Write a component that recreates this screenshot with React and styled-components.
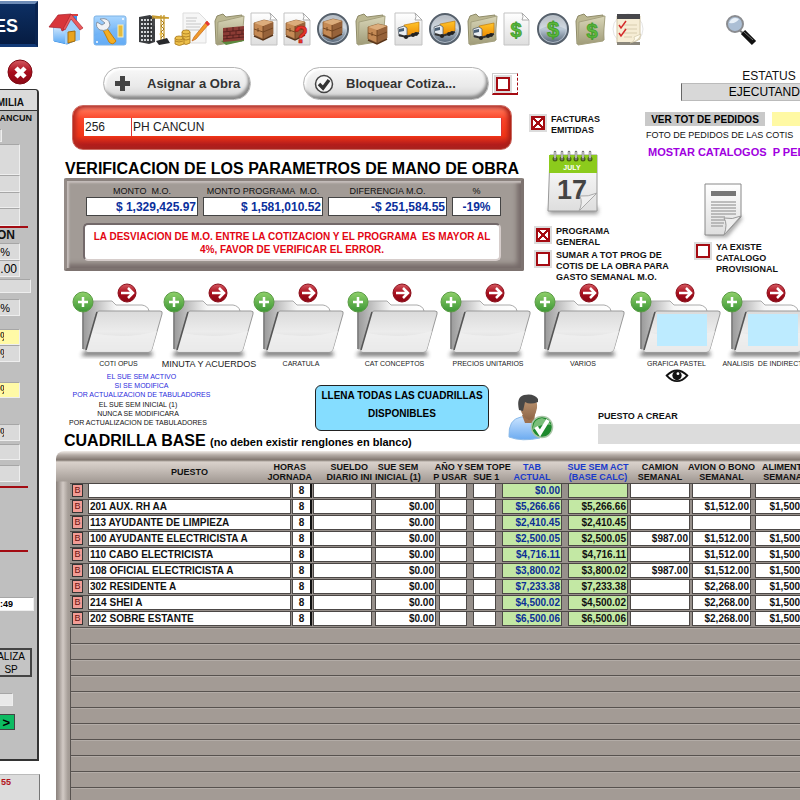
import * as React from "react";
import styled, { createGlobalStyle, css } from "styled-components";

const GlobalStyle = createGlobalStyle`
  * {
    box-sizing: border-box;
  }
  body {
    margin: 0;
    background: #fff;
    color: #111;
    font-family: "Liberation Sans", Arial, sans-serif;
    font-size: 10px;
    overflow-x: hidden;
  }
  input,
  button {
    font-family: inherit;
    border-radius: 0;
    margin: 0;
  }
  svg {
    display: block;
    overflow: visible;
  }
`;

const Page = styled.div`
  display: flex;
  min-height: 100vh;
  overflow: hidden;
`;

/* ---------- left side panel ---------- */

const Side = styled.aside`
  flex: 0 0 40px;
  display: flex;
  flex-direction: column;
  align-items: flex-start;
  overflow: hidden;
`;

const Brand = styled.div`
  display: flex;
  align-items: center;
  justify-content: flex-end;
  width: 38px;
  height: 46px;
  margin-top: 1px;
  padding: 4px 17px 0 0;
  color: #fff;
  font-size: 18px;
  font-weight: bold;
  background: linear-gradient(#0d2f63, #061c42);
  border: 3px solid #123a77;
  border-top-color: #6f8db8;
  border-right-color: #0a2450;
  border-left: 0;
`;

const IconButton = styled.button`
  padding: 0;
  border: 0;
  background: none;
  cursor: pointer;
`;

const CloseButton = styled(IconButton)`
  margin: 13px 0 4px 8px;
`;

const SidePanel = styled.div`
  width: 39px;
  height: 672px;
  background: #bfbfbf;
  border: solid #333;
  border-width: 1px 2px 2px 0;
  border-top-right-radius: 4px;
  overflow: hidden;
`;

const SideHead = styled.div`
  display: flex;
  align-items: center;
  justify-content: flex-end;
  height: 21px;
  padding: 4px 13px 0 0;
  background: #dadada;
  border-bottom: 1px solid #333;
  font-weight: bold;
`;

const SideText = styled.div`
  display: flex;
  justify-content: flex-end;
  width: ${p => p.$w}px;
  font-size: ${p => p.$size}px;
  line-height: 14px;
  font-weight: bold;
`;

const SideField = styled.input`
  display: block;
  width: ${p => p.$w || 20}px;
  height: ${p => p.$h || 16}px;
  margin-top: ${p => p.$mt || 0}px;
  padding: 0 ${p => p.$pad || 1}px 0 0;
  border: solid #eee;
  border-width: 0 1px 1px 0;
  border-top: 1px solid #a6a6a6;
  background: ${p => p.$bg || "#dadada"};
  font-size: ${p => p.$size || 12}px;
  font-weight: ${p => (p.$bold ? "bold" : "normal")};
  text-align: right;
  outline: none;
`;

const RedLine = styled.div`
  width: 28px;
  height: 2px;
  margin-top: ${p => p.$mt || 0}px;
  background: #a30b12;
`;

const SideButton = styled.button`
  display: flex;
  align-items: center;
  justify-content: flex-end;
  width: 32px;
  height: 29px;
  margin-top: 37px;
  padding: 0 5px 0 0;
  border: 2px solid #444;
  border-left: 0;
  background: #c4c4c4;
  font-size: 10px;
  line-height: 13px;
`;

const NextButton = styled(SideButton)`
  width: 15px;
  height: 16px;
  margin-top: 8px;
  padding: 0 4px 0 0;
  background: #0dbb62;
  border-width: 1px;
  font-weight: bold;
  font-size: 13px;
`;

const SideFooter = styled.div`
  display: flex;
  justify-content: flex-end;
  flex: 1;
  width: 40px;
  margin-top: 13px;
  padding: 2px 28px 0 0;
  background: #dcdcdc;
  border-top: 1px solid #bbb;
  border-right: 1px solid #777;
  color: #b3131b;
  font-size: 9px;
  font-weight: bold;
`;

/* ---------- main area ---------- */

const Main = styled.main`
  flex: 1;
  min-width: 0;
  display: flex;
  flex-direction: column;
`;

const Toolbar = styled.nav`
  display: flex;
  gap: 5px;
  height: 66px;
  padding: 12px 0 0 8px;
  align-items: flex-start;

  & > :last-child {
    margin-left: 75px;
  }
`;

const Upper = styled.section`
  display: flex;
`;

const LeftColumn = styled.div`
  flex: 0 0 487px;
  min-width: 0;
`;

const PillRow = styled.div`
  display: flex;
  align-items: center;
  padding: 1px 0 0 63px;
`;

const PillButton = styled.button`
  display: flex;
  align-items: center;
  width: ${p => p.$w}px;
  height: 33px;
  margin-right: ${p => p.$gap}px;
  padding: 0 0 0 10px;
  gap: ${p => p.$inner}px;
  border: 1px solid #b5b5b5;
  border-radius: 17px;
  background: linear-gradient(#f8f8f8, #e9e9e9 60%, #cfcfcf);
  box-shadow: inset -2px -3px 3px #888, inset 2px 2px 2px #fff;
  color: #333;
  font-size: 13px;
  font-weight: bold;
  white-space: nowrap;
`;

const CheckFrame = styled.div`
  width: 26px;
  height: 22px;
  padding: 1px;
  border: 1px solid #ccc;
  border-bottom: 2px solid #a50b12;
  border-right: 1px dashed #a50b12;
`;

const CheckInput = styled.input`
  appearance: none;
  flex: none;
  display: block;
  width: 18px;
  height: 18px;
  margin: 0;
  padding: 0;
  border: 2px solid #dcdcdc;
  box-shadow: inset 0 0 0 2px #a50b12;
  background: #fff;

  &:checked {
    background: linear-gradient(
        45deg,
        transparent 44%,
        #a50b12 45%,
        #a50b12 55%,
        transparent 56%
      ),
      linear-gradient(
        -45deg,
        #fff 44%,
        #a50b12 45%,
        #a50b12 55%,
        #fff 56%
      );
  }
`;

const RedPanel = styled.div`
  display: flex;
  height: 45px;
  margin: 5px 15px 0 32px;
  padding: 12px 9px 14px 11px;
  border-radius: 11px;
  border: 1px solid #c96a62;
  background: linear-gradient(
    #d98078,
    #ff6a4c 12%,
    #f9452a 30%,
    #f03416 70%,
    #b81f1c 88%,
    #a31d20
  );
  box-shadow: inset 3px 0 4px #b52a20, inset -3px 0 4px #a82118;
`;

const PlainInput = styled.input`
  height: 18px;
  width: ${p => p.$w || "auto"};
  flex: ${p => (p.$w ? "none" : 1)};
  min-width: 0;
  padding: 0 1px;
  border: 0;
  border-right: 1px solid #d33;
  background: #fff;
  color: #222;
  font-size: 12px;
  outline: none;
`;

const Title = styled.h1`
  margin: 10px 0 0 25px;
  font-size: 16px;
  line-height: 18px;
  white-space: nowrap;
  color: #000;
`;

const bevel = css`
  background: #a29b96;
  border: 3px solid #7d7370;
  border-top-color: #8b827e;
  border-left-color: #948b87;
  box-shadow: inset 2px 2px 2px #c5bdba, inset -4px -4px 5px #766b69;
`;

const CheckPanel = styled.div`
  ${bevel}
  height: 93px;
  margin: 0 3px 0 24px;
  padding: 4px 20px 0 19px;
  border-radius: 2px;
`;

const Amounts = styled.div`
  display: grid;
  grid-template-columns: 112fr 120fr 119fr 49fr;
  gap: 5px;
`;

const Amount = styled.label`
  display: flex;
  flex-direction: column;
  align-items: center;
  min-width: 0;
  font-size: 9px;
  line-height: 12px;
  white-space: pre;

  input {
    width: 100%;
    height: 19px;
    padding: 0 1px;
    border: 1px solid #444;
    background: #fff;
    color: #0a2f9c;
    font-size: 12px;
    font-weight: bold;
    text-align: ${p => (p.$center ? "center" : "right")};
    outline: none;
  }
`;

const Warning = styled.p`
  height: 38px;
  margin: 7px 0 0 -3px;
  padding: 5px 4px 0;
  border: 2px solid #73696a;
  border-right-color: #d6cdcb;
  border-bottom-color: #d6cdcb;
  border-radius: 5px;
  background: #fff;
  color: #e30613;
  font-size: 10px;
  line-height: 13px;
  font-weight: bold;
  text-align: center;
  white-space: pre;
`;

const MiddleColumn = styled.div`
  flex: 0 0 118px;
  min-width: 0;
  padding: 48px 0 0 2px;
  white-space: nowrap;
`;

const CheckRow = styled.label`
  display: flex;
  align-items: flex-start;
  gap: 4px;
  margin: ${p => p.$mt || 0}px 0 0 ${p => p.$ml || 0}px;
  font-size: 9px;
  line-height: 11px;
  font-weight: bold;
`;

const Calendar = styled(IconButton)`
  display: block;
  margin: 14px 0 0 17px;
`;

const RightColumn = styled.div`
  flex: 1;
  min-width: 0;
  overflow: hidden;
  white-space: nowrap;
`;

const Status = styled.label`
  display: flex;
  flex-direction: column;
  align-items: center;
  width: 176px;
  margin-left: 36px;
  padding-top: 3px;
  font-size: 12px;
  line-height: 14px;

  input {
    width: 100%;
    height: 18px;
    border: 1px solid #bbb;
    border-left-color: #666;
    background: #d8d8d8;
    font-size: 12px;
    text-align: center;
  }
`;

const Orders = styled.div`
  display: flex;
  gap: 7px;
  margin-top: 11px;

  button {
    flex: none;
    width: 120px;
    height: 14px;
    padding: 0;
    border: 0;
    background: #c9c9c9;
    font-size: 10px;
    font-weight: bold;
  }
  input {
    flex: 1;
    min-width: 0;
    height: 14px;
    border: 0;
    background: #fff9a4;
  }
`;

const OrdersNote = styled.div`
  margin: 4px 0 0 1px;
  font-size: 9px;
  line-height: 10px;
`;

const CatalogLink = styled.a`
  display: block;
  margin: 6px 0 0 3px;
  color: #a000e0;
  font-size: 11px;
  line-height: 13px;
  font-weight: bold;
  text-decoration: none;
  white-space: pre;
`;

const DocButton = styled(IconButton)`
  display: block;
  margin: 23px 0 0 58px;
`;

const Folders = styled.section`
  display: grid;
  grid-template-columns: 91px 90px 94px 93px 94px 96px 91px 91px;
  height: 89px;
  padding-left: 33px;
`;

const FolderButton = styled.button`
  display: flex;
  flex-direction: column;
  align-items: center;
  padding: 0;
  border: 0;
  background: none;
  font-size: ${p => p.$size || 7}px;
  line-height: 10px;
  white-space: pre;
  color: #222;

  svg:first-child {
    align-self: flex-start;
  }
`;

const Actions = styled.section`
  display: flex;
  align-items: flex-start;
  padding-left: 24px;
`;

const ActionStack = styled.div`
  flex: 0 0 425px;
  margin-right: 19px;
`;

const ActionRow = styled.div`
  display: flex;
  justify-content: space-between;
  align-items: flex-start;
`;

const Notes = styled.div`
  width: 155px;
  font-size: 7px;
  line-height: 9px;
  text-align: center;
  white-space: nowrap;

  p {
    margin: 0 7px 1px 0;
  }
  p:first-child {
    margin-right: 0;
    color: #2b2bdc;
  }
`;

const FillButton = styled.button`
  width: 174px;
  height: 46px;
  margin-top: 13px;
  padding: 0 0 6px;
  border: 1px solid #222;
  border-radius: 6px;
  background: #85ddff;
  font-size: 10px;
  line-height: 18px;
  font-weight: bold;
`;

const PersonButton = styled(IconButton)`
  margin-top: 21px;
`;

const NewPosition = styled.label`
  flex: 1;
  margin: 39px 0 0 43px;
  font-size: 9px;
  line-height: 11px;
  font-weight: bold;

  input {
    display: block;
    width: 100%;
    height: 20px;
    margin-top: 2px;
    border: 0;
    background: #dcdcdc;
  }
`;

const Subtitle = styled.h2`
  margin: 1px 0 0;
  font-size: 16px;
  line-height: 18px;
  color: #000;
  white-space: nowrap;

  small {
    font-size: 11px;
  }
`;

const GridPanel = styled.section`
  flex: 1;
  display: flex;
  flex-direction: column;
  margin-left: 16px;
  padding: 11px 0 0 14px;
  overflow: hidden;
  border-top-left-radius: 8px;
  background: linear-gradient(
      #f1ece8,
      #b5aca6 4px,
      #80766f 9px,
      #d9d1cb 11px,
      #cdc5bf 16px,
      #a59d97 30px,
      transparent 31px
    ),
    linear-gradient(
      90deg,
      #8b827d,
      #a39b96 3px,
      #d2cac5 7px,
      #a59d97 12px,
      #a39b95 14px
    );
`;

const Grid = styled.table`
  width: 747px;
  table-layout: fixed;
  border-collapse: collapse;
  font-size: 10px;
  font-weight: bold;
`;

const HeadCell = styled.th`
  height: 21px;
  padding: 0 ${p => p.$gap || 0}px 0 0;
  color: ${p => (p.$blue ? "#1a3acb" : "#111")};
  font-size: 9px;
  line-height: 10px;
  white-space: pre;

  div {
    display: flex;
    justify-content: ${p => p.$align || "center"};
  }
`;

const Cell = styled.td`
  height: 16px;
  padding: 0 ${p => p.$gap || 0}px 1px 0;
  background: #97908b;
  border-top: 1px solid #4b4745;
`;

const CellBox = styled.div`
  height: 14px;
  padding: 0 1px;
  border: 1px solid #4c4846;
  border-width: 0 1px 1px;
  background: ${p => (p.$green ? "#c3e8a4" : "#fff")};
  color: ${p => (p.$blue ? "#0c2f95" : "#111")};
  text-align: ${p => p.$align || "right"};
  line-height: 14px;
  white-space: nowrap;
  ${p => p.$raised && "border-right: 2px solid #111;"}
`;

const DeleteButton = styled.button`
  display: block;
  width: 11px;
  height: 13px;
  margin-left: 2px;
  padding: 0;
  border: 1px solid #333;
  background: #f29c95;
  color: #6a1111;
  font-size: 9px;
  line-height: 11px;
`;

const EmptyRows = styled.div`
  flex: 1;
  min-height: 120px;
  border-left: 1px solid #57524f;
  background: repeating-linear-gradient(
    #57524f,
    #57524f 1px,
    #b3aca7 1px,
    #b3aca7 2px,
    #a39b95 2px,
    #a39b95 16px
  );
`;

/* ---------- drawings ---------- */

const Gradient = ({ id, from, to, mid, x }) => (
  <linearGradient id={id} x1="0" y1="0" x2={x ? 1 : 0} y2={x ? 0 : 1}>
    <stop offset="0" stopColor={from} />
    {mid && <stop offset=".5" stopColor={mid} />}
    <stop offset="1" stopColor={to} />
  </linearGradient>
);

const HiddenSvg = styled.svg`
  position: absolute;
`;

const Gradients = () => (
  <HiddenSvg width="0" height="0" aria-hidden="true">
    <defs>
      <Gradient id="sky" from="#a9d6ff" to="#4c9df0" />
      <Gradient id="wall" from="#ffffff" to="#59a9f5" />
      <Gradient id="paper" from="#ffffff" to="#dedede" />
      <Gradient id="steel" from="#8b929b" mid="#bcc9d6" to="#4e5d6e" />
      <Gradient id="khaki" from="#d9d6b8" to="#9f9b78" />
      <Gradient id="truck" from="#ffc52b" to="#ee8a00" />
      <Gradient id="green" from="#8fd06a" to="#3c9636" />
      <Gradient id="red" from="#d55a62" mid="#a80d1c" to="#8a0815" />
      <Gradient id="front" from="#dadada" mid="#ececec" to="#cfcfcf" />
      <Gradient id="back" from="#9a9a9a" mid="#f7f7f7" to="#fff" x />
      <Gradient id="skin" from="#c29a76" to="#8d6547" />
      <Gradient id="shirt" from="#c9e3ff" to="#6cabf0" />
      <filter id="soft" x="-20%" y="-50%" width="140%" height="200%">
        <feGaussianBlur stdDeviation="2" />
      </filter>
    </defs>
  </HiddenSvg>
);

const House = () => (
  <g>
    <rect x="24" y="3" width="5" height="10" fill="#3f8fe8" />
    <rect x="23" y="2" width="7" height="2" fill="#d8403f" />
    <path d="M6 15 L19 5 L31 16 V27 L19 32 L6 29Z" fill="url(#wall)" stroke="#3b8de0" />
    <path d="M6 15 L10 8 L19 18 V32 L6 29Z" fill="url(#wall)" />
    <path d="M10 7 L23 6 L32 17 V28 L17 32 V18Z" fill="#9fd0fb" />
    <path d="M1 15 L10 3 L23 2 L16 18 L14 19 L13 16Z" fill="#d8363b" stroke="#a51d26" strokeWidth=".7" />
    <path d="M23 2 L35 16 L32 18 L23 7 L17 18 L15 17Z" fill="#ea5a5c" stroke="#a51d26" strokeWidth=".6" />
    <path d="M20 20 L27 19 V29 L20 31Z" fill="#e8a41f" stroke="#a86c0b" />
  </g>
);

const Tools = () => (
  <g>
    <rect x="3" y="4" width="32" height="29" rx="2" fill="url(#sky)" stroke="#7db2e4" />
    <path d="M3 24 Q18 18 35 12 V33 H3Z" fill="#74b5f6" opacity=".6" />
    <path d="M15 15 L25 29 Q22 34 18 30 L12 18Z" fill="#f5ae22" stroke="#c67d08" />
    <path d="M9 7 Q18 5 19 13 Q17 20 9 18 Q4 15 6 10 L11 13 L14 11Z" fill="#f1f3f6" stroke="#8795a6" />
    <rect x="27" y="13" width="5" height="12" fill="#e5bb3c" stroke="#f8edbc" />
    <circle cx="6" cy="30" r="1" fill="#fff" />
    <circle cx="32" cy="7" r="1" fill="#fff" />
  </g>
);

const Crane = () => (
  <g>
    <path d="M5 5 L16 3 L21 6 V30 L15 32 L5 30Z" fill="#3b3d40" />
    <path d="M7 8h11M7 12h11M7 16h11M7 20h11M7 24h11M7 28h11" stroke="#d2d4d6" strokeWidth="2" strokeDasharray="2 1" />
    <path d="M16 5 V31" stroke="#222" />
    <path d="M27 3 V30 M30 3 V30 M18 6 H35 M18 4 L35 6" stroke="#c79a2d" strokeWidth="1.3" />
    <path d="M27 8 L30 11 L27 14 L30 17 L27 20 L30 23 L27 26" fill="none" stroke="#a87c1b" />
    <path d="M20 6 V14" stroke="#555" />
    <path d="M22 29 L33 26 L36 31 L25 33Z" fill="#28292c" />
    <circle cx="27" cy="22" r="1.5" fill="#edc14c" />
  </g>
);

const Sheet = ({ w = 27 }) => (
  <g>
    <path d={`M1 1 H${w - 7} L${w} 8 V33 H1Z`} fill="url(#paper)" stroke="#c3c3c3" />
    <path d={`M${w - 7} 1 Q${w - 5} 5 ${w - 7} 8 H${w}Z`} fill="#fff" stroke="#aaa" />
  </g>
);

const Coins = () => (
  <g>
    <path d="M8 1 H24 L31 8 V31 H8Z" fill="#f6f6f6" stroke="#ddd" />
    <path d="M11 6h11M11 9h10M11 12h15M11 15h14M11 18h13" stroke="#bbb" strokeWidth=".8" />
    <path d="M32 9 L34 12 L21 27 L17 29 L19 25Z" fill="#f09a2a" stroke="#c3661a" strokeWidth=".7" />
    <path d="M31 10 L34 13" stroke="#e43636" strokeWidth="3" />
    <g fill="#edc04b" stroke="#a9781d" strokeWidth=".8">
      <path d="M7 20v11q4 3 8 0V20Z" />
      <ellipse cx="11" cy="20" rx="4" ry="2" />
      <path d="M0 26v6q4 3 9 0v-6Z" />
      <ellipse cx="4" cy="26" rx="4" ry="2" />
      <path d="M7 24q4 2 8 0M7 27q4 2 8 0M0 29q4 2 8 0" fill="none" />
    </g>
  </g>
);

const Archive = () => (
  <g>
    <path d="M1 9 L3 4 L9 2 L12 5 L28 3 L29 28 L2 32Z" fill="#bcb892" stroke="#8f8b69" />
    <path d="M4 10 L13 8 L30 4 L28 29 L3 33Z" fill="url(#khaki)" stroke="#a5a17f" />
  </g>
);

const Bricks = () => (
  <g>
    <Archive />
    <path d="M7 29 L30 24 V29 L12 33Z" fill="#5c8a3f" />
    <path d="M9 16 L30 14 V28 L9 30Z" fill="#8c3c35" />
    <path
      d="M9 20 L30 18 M9 24 L30 22 M9 27 L30 25 M13 16v3M19 15v4M25 15v3M16 20v3M22 19v3M28 19v3M13 24v3M19 23v3M25 23v3"
      stroke="#4c1c19"
      strokeWidth=".8"
    />
  </g>
);

const Crate = ({ x = 0, y = 0 }) => (
  <g transform={`translate(${x} ${y})`}>
    <path d="M0 3 L10 0 L19 2 V14 L9 19 L0 15Z" fill="#c58a55" stroke="#815027" strokeWidth=".7" />
    <path d="M9 6 L19 2 V14 L9 19Z" fill="#96623a" />
    <path d="M0 3 L9 6 L19 2 L10 0Z" fill="#dcad7c" />
    <path d="M0 9 L9 12 L19 8 M9 6 V19 M4 8 V12" fill="none" stroke="#71431f" strokeWidth=".9" />
    <path d="M0 16 L9 20 L19 15" fill="none" stroke="#5a3519" strokeWidth="1.5" />
  </g>
);

const Truck = ({ x = 0, y = 0 }) => (
  <g transform={`translate(${x} ${y})`}>
    <path d="M6 3 L21 0 V10 L8 14Z" fill="url(#truck)" stroke="#bb7000" strokeWidth=".6" />
    <path d="M0 6 L6 4 L9 6 V15 L1 14Z" fill="#e8edf2" stroke="#58616a" strokeWidth=".8" />
    <path d="M1 7 L6 6 V9 L1 10Z" fill="#4a6076" />
    <path d="M1 13 L8 15 L21 11" stroke="#333" strokeWidth="2" fill="none" />
    <circle cx="8" cy="15" r="2" fill="#222" />
    <circle cx="15" cy="13" r="2" fill="#222" />
    <circle cx="18" cy="12" r="2" fill="#222" />
  </g>
);

const Disc = () => (
  <g>
    <circle cx="17" cy="17" r="15" fill="url(#steel)" stroke="#56606b" strokeWidth="2" />
    <circle cx="17" cy="17" r="13.5" fill="none" stroke="#c3ccd5" strokeWidth=".8" />
    <path d="M4 17 A13 13 0 0 1 30 17 Q17 10 4 17Z" fill="#fff" opacity=".35" />
  </g>
);

const Dollar = ({ x, y, size = 20 }) => (
  <text
    x={x}
    y={y}
    fontSize={size}
    fontWeight="bold"
    textAnchor="middle"
    fill="#5cbb3a"
    stroke="#3f9a2c"
    strokeWidth=".8"
  >
    $
  </text>
);

const Question = () => (
  <g>
    <Sheet />
    <Crate x={3} y={8} />
    <text x="18" y="31" fontSize="23" fontWeight="bold" textAnchor="middle" fill="#e5352a" stroke="#a91912" strokeWidth=".6">
      ?
    </text>
  </g>
);

const Checklist = () => (
  <g>
    <circle cx="16" cy="17" r="15" fill="#fff" stroke="#e5e5e5" />
    <path d="M5 4 H28 V27 L20 31 H5Z" fill="#f6edd5" stroke="#d4c8a9" />
    <path d="M5 30 H28 V33 H5Z" fill="#8a867b" />
    <rect x="5" y="2" width="23" height="5" fill="#47474b" />
    <path d="M12 13h13M12 17h13M12 21h13M12 25h8" stroke="#d8cdaf" />
    <path d="M7 13l2 3 5-7M7 21l2 3 5-7" fill="none" stroke="#d42b2b" strokeWidth="1.5" />
    <path d="M18 31 Q24 29 22 25 L29 22 Q27 29 18 31Z" fill="#fffbed" stroke="#cabf9f" strokeWidth=".6" />
  </g>
);

const Search = () => (
  <g>
    <path d="M15 18 L19 21" stroke="#777" strokeWidth="2" />
    <path d="M19 20 L30 31" stroke="#111" strokeWidth="6" />
    <path d="M20 20 L29 28" stroke="#777" strokeWidth="1" />
    <circle cx="11" cy="12" r="8" fill="#acbfd5" stroke="#8a8c90" strokeWidth="2" />
    <path d="M5 11 Q8 4 15 7 Q12 12 5 11Z" fill="#e8f0f8" />
  </g>
);

const tools = [
  { name: "Inicio", w: 38, art: <House /> },
  { name: "Herramientas", w: 38, art: <Tools /> },
  { name: "Obras", w: 36, art: <Crane /> },
  { name: "Presupuestos", w: 34, art: <Coins /> },
  { name: "Materiales", w: 31, art: <Bricks /> },
  { name: "Pedido", w: 28, art: <><Sheet /><Crate x={4} y={8} /></> },
  { name: "Pedido pendiente", w: 28, art: <Question /> },
  { name: "Pedidos", w: 34, art: <><Disc /><Crate x={7} y={7} /></> },
  { name: "Archivo de pedidos", w: 34, art: <><Archive /><Crate x={13} y={12} /></> },
  { name: "Entrega", w: 29, art: <><Sheet w={28} /><Truck x={4} y={10} /></> },
  { name: "Entregas", w: 34, art: <><Disc /><Truck x={6} y={9} /></> },
  { name: "Archivo de entregas", w: 31, art: <><Archive /><Truck x={6} y={11} /></> },
  { name: "Pago", w: 28, art: <><Sheet w={26} /><Dollar x={13} y={25} /></> },
  { name: "Pagos", w: 34, art: <><Disc /><Dollar x={17} y={25} size={22} /></> },
  { name: "Archivo de pagos", w: 32, art: <><Archive /><Dollar x={17} y={26} /></> },
  { name: "Pendientes", w: 32, art: <Checklist /> },
  { name: "Buscar", w: 34, art: <Search /> }
];

const CloseIcon = () => (
  <svg width="25" height="25" viewBox="0 0 25 25">
    <circle cx="12" cy="12" r="12" fill="url(#red)" stroke="#7e0a14" />
    <path d="M8 8 L17 17 M17 8 L8 17" stroke="#fff" strokeWidth="4.5" />
  </svg>
);

const PlusIcon = () => (
  <svg width="17" height="17" viewBox="0 0 17 17">
    <path d="M8.500 1 V16 M1 8.500 H16" stroke="#444" strokeWidth="5" />
  </svg>
);

const TickIcon = () => (
  <svg width="20" height="20" viewBox="0 0 20 20">
    <circle cx="10" cy="10" r="8.500" fill="#f6f6f6" stroke="#444" strokeWidth="1.500" />
    <path d="M5 10 L9 14 L15 6" fill="none" stroke="#333" strokeWidth="3.500" />
  </svg>
);

const CalendarIcon = () => (
  <svg width="54" height="66" viewBox="0 0 54 66">
    <rect x="3" y="57" width="49" height="7" fill="#555" opacity=".6" filter="url(#soft)" />
    <path d="M4 5 H51 V61 H2Z" fill="url(#paper)" stroke="#999" />
    <path d="M3 5 H51 V23 H3Z" fill="#8ccb1c" />
    {[9, 16, 23, 30, 37, 44].map(x => (
      <g key={x}>
        <circle cx={x} cy="9" r="2.500" fill="#45600f" />
        <path d={`M${x} 9 V2`} stroke="#777" strokeWidth="2.500" strokeLinecap="round" />
        <path d={`M${x} 8 V2`} stroke="#eee" strokeWidth="1" />
      </g>
    ))}
    <text x="26" y="20" fontSize="7" fontWeight="bold" textAnchor="middle" fill="#fff">
      JULY
    </text>
    <text x="26" y="49" fontSize="27" fontWeight="bold" textAnchor="middle" fill="#444">
      17
    </text>
    <path d="M33 61 Q37 53 34 46 Q42 47 51 43Z" fill="#eee" stroke="#aaa" />
  </svg>
);

const DocumentIcon = () => (
  <svg width="40" height="56" viewBox="0 0 40 56">
    <path d="M3 53 H23 L38 35" stroke="#777" strokeWidth="3" fill="none" filter="url(#soft)" />
    <path d="M2 2 H38 V35 L21 53 H2Z" fill="url(#paper)" stroke="#888" />
    <rect x="8" y="9" width="25" height="5" fill="#777" />
    <path d="M8 20h25M8 23h25M8 26h25M8 29h25M8 32h25M8 35h14M8 38h14M8 41h13M8 44h12" stroke="#aaa" strokeWidth="1.500" />
    <path d="M21 53 Q25 42 21 36 Q29 38 38 34Z" fill="#eee" stroke="#999" />
  </svg>
);

const BigFolder = ({ blue }) => (
  <svg width="90" height="76" viewBox="0 0 90 76">
    <path d="M12 68 H78 L80 73 H8Z" fill="#333" opacity=".7" filter="url(#soft)" />
    <path d="M10 20 Q10 18 13 18 H39 L43 22 H69 Q75 23 76 28 V66 H10Z" fill="url(#back)" stroke="#aaa" />
    <path d="M10 28 V66" stroke="#777" strokeWidth="1.500" />
    <path d="M26 28 H87 Q90 28 89 31 L79 66 Q78 69 75 69 H15 Q12 69 13 66 L23 31 Q24 28 26 28Z" fill="url(#front)" stroke="#999" />
    <path d="M19 50 Q54 57 84 48 L79 66 Q78 69 75 69 H15 Q12 69 13 66Z" fill="#f0f0f0" opacity=".8" />
    <path d="M24 29 L13 67" stroke="#555" strokeWidth="1.500" />
    {blue && <rect x="26" y="31" width="50" height="32" fill="#bdebff" />}
    <circle cx="10" cy="19" r="10" fill="url(#green)" stroke="#5b9c45" />
    <path d="M10 14 V24 M5 19 H15" stroke="#fff" strokeWidth="2.500" />
    <circle cx="54" cy="10" r="9" fill="url(#red)" stroke="#8b101c" />
    <path d="M48 10 H59 M55 5 L60 10 L55 15" fill="none" stroke="#fff" strokeWidth="2.500" />
  </svg>
);

const Eye = () => (
  <svg width="24" height="14" viewBox="0 0 24 15">
    <path d="M1 7 Q12 -4 23 7 Q12 19 1 7Z" fill="#fff" stroke="#111" strokeWidth="2" />
    <circle cx="12" cy="7" r="5" fill="#111" />
    <circle cx="13" cy="5" r="1.500" fill="#fff" />
  </svg>
);

const Person = () => (
  <svg width="47" height="48" viewBox="0 0 47 48">
    <path d="M1 44 Q0 26 13 24 H24 Q34 30 32 45 Q14 49 1 44Z" fill="url(#shirt)" stroke="#8dbbe9" />
    <path d="M14 22 L17 30 L26 30 L27 21Z" fill="#9d7150" />
    <path d="M12 9 Q13 3 21 4 Q30 4 29 15 Q27 26 21 27 Q14 25 12 14Z" fill="url(#skin)" />
    <path d="M11 17 Q8 4 16 2 Q26 0 30 6 V9 Q22 12 17 9 L15 18Z" fill="#474747" />
    <circle cx="34" cy="34" r="10.500" fill="#1f8a2e" stroke="#a9c6a7" strokeWidth="1.500" />
    <path d="M25 34 Q26 26 34 25 Q41 27 43 32 Q34 30 25 37Z" fill="#9fd49a" opacity=".7" />
    <path d="M28 34 L32 40 L40 27" fill="none" stroke="#fff" strokeWidth="4" />
  </svg>
);

/* ---------- data ---------- */

const folders = [
  { label: "COTI OPUS" },
  { label: "MINUTA Y ACUERDOS", size: 9 },
  { label: "CARATULA" },
  { label: "CAT CONCEPTOS" },
  { label: "PRECIOS UNITARIOS" },
  { label: "VARIOS" },
  { label: "GRAFICA PASTEL", blue: true, eye: true },
  { label: "ANALISIS  DE INDIRECTOS", blue: true }
];

const columns = [
  { key: "del", w: 18, head: "" },
  { key: "puesto", w: 204, gap: 1, head: "PUESTO", align: "left" },
  { key: "horas", w: 21, gap: 1, head: "HORAS\nJORNADA", headAlign: "flex-end", align: "center", raised: true },
  { key: "sueldo", w: 62, gap: 3, head: "SUELDO\nDIARIO INI", headAlign: "flex-end" },
  { key: "inicial", w: 64, gap: 3, head: "SUE SEM\nINICIAL (1)", headAlign: "flex-start" },
  { key: "anio", w: 34, gap: 6, head: "AÑO Y \nP USAR", headAlign: "flex-end" },
  { key: "tope", w: 29, gap: 6, headGap: 0, head: "SEM TOPE\nSUE 1 " },
  { key: "tab", w: 66, gap: 6, head: "TAB\nACTUAL", green: true, blue: true },
  { key: "base", w: 62, gap: 2, head: "SUE SEM ACT\n(BASE CALC)", green: true, headBlue: true },
  { key: "camion", w: 62, gap: 2, head: "CAMION\nSEMANAL" },
  { key: "avion", w: 63, gap: 4, head: "AVION O BONO\nSEMANAL" },
  { key: "alimento", w: 62, gap: 1, head: "ALIMENTO\nSEMANAL" }
];

const row = (puesto, sueldoSemanal, avion = "", camion = "") => ({
  puesto,
  horas: "8",
  inicial: "$0.00",
  tab: sueldoSemanal,
  base: sueldoSemanal,
  camion,
  avion,
  alimento: avion && "$1,500.00"
});

const rows = [
  { horas: "8", tab: "$0.00" },
  row("201 AUX. RH AA", "$5,266.66", "$1,512.00"),
  row("113 AYUDANTE DE LIMPIEZA", "$2,410.45"),
  row("100 AYUDANTE ELECTRICISTA A", "$2,500.05", "$1,512.00", "$987.00"),
  row("110 CABO ELECTRICISTA", "$4,716.11", "$1,512.00"),
  row("108 OFICIAL ELECTRICISTA A", "$3,800.02", "$1,512.00", "$987.00"),
  row("302 RESIDENTE A", "$7,233.38", "$2,268.00"),
  row("214 SHEI A", "$4,500.02", "$2,268.00"),
  row("202 SOBRE ESTANTE", "$6,500.06", "$2,268.00")
];

const Sidebar = () => (
  <Side>
    <Brand>ES</Brand>
    <CloseButton aria-label="Cerrar">
      <CloseIcon />
    </CloseButton>
    <SidePanel>
      <SideHead>MILIA</SideHead>
      <SideText $w={32} $size={9}>CANCUN</SideText>
      <SideField aria-label="Clave" $w={2} $h={13} $mt={4} />
      <SideField aria-label="Descripcion" $h={31} $mt={2} />
      <SideField aria-label="Dato 1" $h={17} />
      <SideField aria-label="Dato 2" $h={16} />
      <SideField aria-label="Dato 3" $h={18} />
      <RedLine />
      <SideText $w={15} $size={12}>ON</SideText>
      <SideField aria-label="Porcentaje" $h={17} $mt={1} $pad={9} $size={11} defaultValue="%" />
      <SideField aria-label="Importe" $h={17} $pad={2} defaultValue=".00" />
      <SideField aria-label="Dato 4" $w={31} $h={14} $mt={2} />
      <SideField aria-label="Porcentaje 2" $h={17} $mt={6} $pad={9} $size={11} defaultValue="%" />
      <SideField aria-label="Porcentaje 3" $mt={13} $pad={15} $bg="#fffaa6" defaultValue="%" />
      <SideField aria-label="Porcentaje 4" $h={17} $pad={15} defaultValue="%" />
      <SideField aria-label="Porcentaje 5" $mt={20} $pad={15} $bg="#fffaa6" defaultValue="%" />
      <SideField aria-label="Porcentaje 6" $h={17} $mt={26} $pad={15} defaultValue="%" />
      <SideField aria-label="Dato 5" $mt={3} />
      <SideField aria-label="Dato 6" $h={17} $mt={5} />
      <RedLine $mt={4} />
      <RedLine $mt={62} />
      <SideField aria-label="Hora" $w={34} $h={14} $mt={45} $pad={20} $bg="#fff" $size={9} $bold defaultValue=":49" />
      <SideButton>ALIZA<br />SP</SideButton>
      <SideField aria-label="Dato 7" $w={13} $h={13} $mt={16} $bg="#e9e9e9" />
      <NextButton>&gt;</NextButton>
    </SidePanel>
    <SideFooter>55</SideFooter>
  </Side>
);

const PuestosGrid = () => (
  <Grid>
    <colgroup>
      {columns.map(c => (
        <col key={c.key} width={c.w} />
      ))}
    </colgroup>
    <thead>
      <tr>
        {columns.map(c => (
          <HeadCell
            key={c.key}
            $gap={c.headGap ?? c.gap}
            $align={c.headAlign}
            $blue={c.blue || c.headBlue}
          >
            <div>{c.head}</div>
          </HeadCell>
        ))}
      </tr>
    </thead>
    <tbody>
      {rows.map((r, i) => (
        <tr key={i}>
          {columns.map(c => (
            <Cell key={c.key} $gap={c.gap}>
              {c.key === "del" ? (
                <DeleteButton>B</DeleteButton>
              ) : (
                <CellBox
                  $align={c.align}
                  $green={c.green}
                  $blue={c.blue}
                  $raised={c.raised}
                >
                  {r[c.key]}
                </CellBox>
              )}
            </Cell>
          ))}
        </tr>
      ))}
    </tbody>
  </Grid>
);

const App = () => {
  return (
    <>
      <GlobalStyle />
      <Gradients />
      <Page>
        <Sidebar />
        <Main>
          <Toolbar>
            {tools.map(t => (
              <IconButton key={t.name} aria-label={t.name}>
                <svg width={t.w} height="34" viewBox={`0 0 ${t.w} 34`}>
                  {t.art}
                </svg>
              </IconButton>
            ))}
          </Toolbar>
          <Upper>
            <LeftColumn>
              <PillRow>
                <PillButton $w={148} $gap={52} $inner={16}>
                  <PlusIcon />
                  Asignar a Obra
                </PillButton>
                <PillButton $w={186} $gap={3} $inner={12}>
                  <TickIcon />
                  Bloquear Cotiza...
                </PillButton>
                <CheckFrame>
                  <CheckInput type="checkbox" aria-label="Bloquear" />
                </CheckFrame>
              </PillRow>
              <RedPanel>
                <PlainInput $w="48px" aria-label="Numero de obra" defaultValue="256" />
                <PlainInput aria-label="Obra" defaultValue="PH CANCUN" />
              </RedPanel>
              <Title>VERIFICACION DE LOS PARAMETROS DE MANO DE OBRA</Title>
              <CheckPanel>
                <Amounts>
                  <Amount>
                    {"MONTO  M.O."}
                    <input defaultValue="$ 1,329,425.97" />
                  </Amount>
                  <Amount>
                    {"MONTO PROGRAMA  M.O."}
                    <input defaultValue="$ 1,581,010.52" />
                  </Amount>
                  <Amount>
                    DIFERENCIA M.O.
                    <input defaultValue="-$ 251,584.55" />
                  </Amount>
                  <Amount $center>
                    %
                    <input defaultValue="-19%" />
                  </Amount>
                </Amounts>
                <Warning>
                  {"LA DESVIACION DE M.O. ENTRE LA COTIZACION Y EL PROGRAMA  ES MAYOR AL\n4%, FAVOR DE VERIFICAR EL ERROR."}
                </Warning>
              </CheckPanel>
            </LeftColumn>
            <MiddleColumn>
              <CheckRow>
                <CheckInput type="checkbox" defaultChecked />
                <span>FACTURAS<br />EMITIDAS</span>
              </CheckRow>
              <Calendar aria-label="Calendario">
                <CalendarIcon />
              </Calendar>
              <CheckRow $mt={10} $ml={5}>
                <CheckInput type="checkbox" defaultChecked />
                <span>PROGRAMA<br />GENERAL</span>
              </CheckRow>
              <CheckRow $mt={2} $ml={5}>
                <CheckInput type="checkbox" />
                <span>SUMAR A TOT PROG DE<br />COTIS DE LA OBRA PARA<br />GASTO SEMANAL M.O.</span>
              </CheckRow>
            </MiddleColumn>
            <RightColumn>
              <Status>
                ESTATUS
                <input defaultValue="EJECUTANDO" />
              </Status>
              <Orders>
                <button>VER TOT DE PEDIDOS</button>
                <input aria-label="Total de pedidos" />
              </Orders>
              <OrdersNote>FOTO DE PEDIDOS DE LAS COTIS</OrdersNote>
              <CatalogLink href="#catalogos">{"MOSTAR CATALOGOS  P PEDIDOS"}</CatalogLink>
              <DocButton aria-label="Catalogo">
                <DocumentIcon />
              </DocButton>
              <CheckRow $mt={4} $ml={49}>
                <CheckInput type="checkbox" />
                <span>YA EXISTE<br />CATALOGO<br />PROVISIONAL</span>
              </CheckRow>
            </RightColumn>
          </Upper>
          <Folders>
            {folders.map(f => (
              <FolderButton key={f.label} $size={f.size}>
                <BigFolder blue={f.blue} />
                {f.label}
                {f.eye && <Eye />}
              </FolderButton>
            ))}
          </Folders>
          <Actions>
            <ActionStack>
              <ActionRow>
                <Notes>
                  <p>EL SUE SEM ACTIVO<br />SI SE MODIFICA<br />POR ACTUALIZACION DE TABULADORES</p>
                  <p>EL SUE SEM INICIAL (1)<br />NUNCA SE MODIFICARA<br />POR ACTUALIZACION DE TABULADORES</p>
                </Notes>
                <FillButton>LLENA TODAS LAS CUADRILLAS<br />DISPONIBLES</FillButton>
              </ActionRow>
              <Subtitle>
                CUADRILLA BASE <small>(no deben existir renglones en blanco)</small>
              </Subtitle>
            </ActionStack>
            <PersonButton aria-label="Asignar puesto">
              <Person />
            </PersonButton>
            <NewPosition>
              PUESTO A CREAR
              <input />
            </NewPosition>
          </Actions>
          <GridPanel>
            <PuestosGrid />
            <EmptyRows />
          </GridPanel>
        </Main>
      </Page>
    </>
  );
};

export default App;
